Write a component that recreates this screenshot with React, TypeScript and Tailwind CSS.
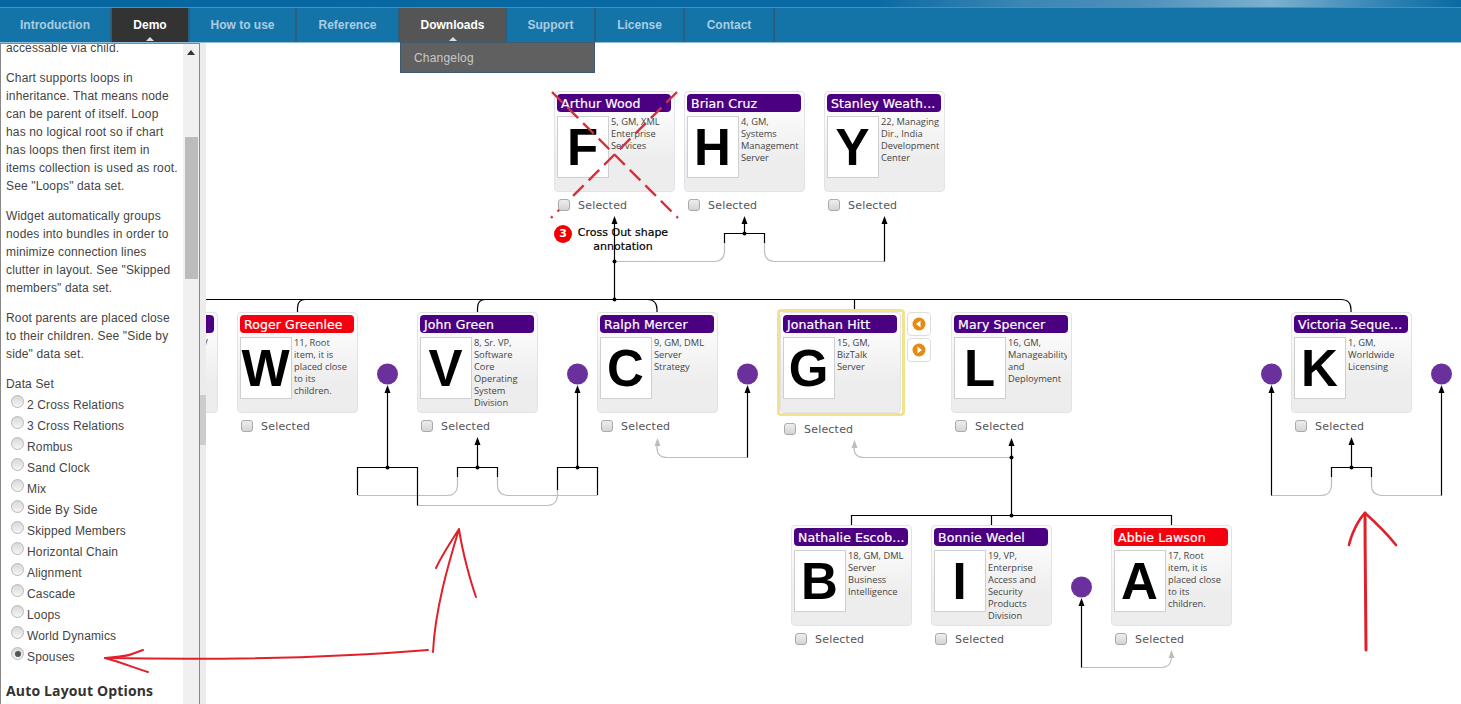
import { ReactNode } from 'react';

const navItems = [
  { label: 'Introduction', w: 'w-[112px]' },
  { label: 'Demo', w: 'w-[78px]', bg: 'bg-[#333333] text-white', caret: true },
  { label: 'How to use', w: 'w-[107px]' },
  { label: 'Reference', w: 'w-[103px]' },
  { label: 'Downloads', w: 'w-[107px]', bg: 'bg-[#555555] text-white', caret: true },
  { label: 'Support', w: 'w-[89px]' },
  { label: 'License', w: 'w-[89px]' },
  { label: 'Contact', w: 'w-[90px]' },
];

const dataSets = [
  '2 Cross Relations',
  '3 Cross Relations',
  'Rombus',
  'Sand Clock',
  'Mix',
  'Side By Side',
  'Skipped Members',
  'Horizontal Chain',
  'Alignment',
  'Cascade',
  'Loops',
  'World Dynamics',
  'Spouses',
];

type NodeData = { x: number; y: number; title: string; letter: string; desc: string; red?: boolean; active?: boolean };

// page coordinates of the chart items
const nodes: NodeData[] = [
  { x: 554, y: 91, title: 'Arthur Wood', letter: 'F', desc: '5, GM, XML Enterprise Services' },
  { x: 684, y: 91, title: 'Brian Cruz', letter: 'H', desc: '4, GM, Systems Management Server' },
  { x: 824, y: 91, title: 'Stanley Weath...', letter: 'Y', desc: '22, Managing Dir., India Development Center' },
  { x: 97, y: 312, title: 'Henry Moore', letter: 'D', desc: '12, GM, NAV' },
  { x: 237, y: 312, title: 'Roger Greenlee', letter: 'W', desc: '11, Root item, it is placed close to its children.', red: true },
  { x: 417, y: 312, title: 'John Green', letter: 'V', desc: '8, Sr. VP, Software Core Operating System Division' },
  { x: 597, y: 312, title: 'Ralph Mercer', letter: 'C', desc: '9, GM, DML Server Strategy' },
  { x: 780, y: 312, title: 'Jonathan Hitt', letter: 'G', desc: '15, GM, BizTalk Server', active: true },
  { x: 951, y: 312, title: 'Mary Spencer', letter: 'L', desc: '16, GM, Manageability and Deployment' },
  { x: 1291, y: 312, title: 'Victoria Seque...', letter: 'K', desc: '1, GM, Worldwide Licensing' },
  { x: 791, y: 525, title: 'Nathalie Escob...', letter: 'B', desc: '18, GM, DML Server Business Intelligence' },
  { x: 931, y: 525, title: 'Bonnie Wedel', letter: 'I', desc: '19, VP, Enterprise Access and Security Products Division' },
  { x: 1111, y: 525, title: 'Abbie Lawson', letter: 'A', desc: '17, Root item, it is placed close to its children.', red: true },
];

const blackPaths = [
  'M206 299.5H1341q10 0 10 10V313',
  'M297.5 313v-5q0-8.500 8-8.500',
  'M477.500 313v-5q0-8.500 8-8.500',
  'M647 299.500q10 0 10 10V313',
  'M854.500 299.500V310',
  'M614.500 222V299.500',
  'M724.500 243V233.500H764.500V243',
  'M744.500 222V233.500',
  'M884.500 222V261.500',
  // John Green group
  'M357.500 495V467.500H417.500V505.500',
  'M387.500 390V467.500',
  'M457.500 477V467.500H497.500V477',
  'M477.500 442V467.500',
  'M557.500 490V467.500H597.500V495',
  'M577.500 390V467.500',
  // Ralph, Mary
  'M747.500 390V457.500',
  'M1011.500 443V515.500',
  'M851.500 525V515.500H1171.500V525',
  'M991.500 515.500V525',
  // Victoria
  'M1271.500 390V495.500',
  'M1441.500 390V495.500',
  'M1331.500 477V467.500H1371.500V477',
  'M1351.500 442V467.500',
  'M1081.500 603V667.500',
];

const grayPaths = [
  'M614.500 261.500H714q10 0 10.500-10V243',
  'M764.500 243v8q0 10 10 10.500H884.500',
  'M357.500 495.500H447q10 0 10.500-10V477',
  'M497.500 477v8q0 10 10 10.500H597.500',
  'M417.500 505.500H547q10 0 10.500-10V488',
  'M747.500 457.500H667q-10 0-10-10V443',
  'M1011.500 457.500H864q-10 0-10-10V445',
  'M1081.500 667.500H1161q10 0 10.500-10V655',
  'M1271.500 495.500H1321q10 0 10.500-10V477',
  'M1371.500 477v8q0 10 10 10.500H1441.500',
];

const arrows = [
  [614.5, 216], [744.5, 216], [884.5, 216],
  [387.5, 385], [477.5, 437], [577.5, 385],
  [747.5, 385], [1011.5, 438], [1081.5, 598],
  [1271.5, 385], [1351.5, 437], [1441.5, 385],
];
const grayArrows = [[657.5, 438], [854.5, 440], [1171.5, 650]];
const dots = [
  [614.5, 299.5], [614.5, 261.5], [744.5, 233.5],
  [387.5, 467.5], [477.5, 467.5], [577.5, 467.5],
  [1011.5, 457.5], [1011.5, 515.5], [1351.5, 467.5],
];
const spouses = [[387.5, 374], [577.5, 374], [747.5, 374], [1271.5, 374], [1441.5, 374], [1081.5, 587]];

function ChartNode({ n }: { n: NodeData }) {
  return (
    <div className="absolute w-[121px]" style={{ left: n.x - 206, top: n.y - 43 }}>
      {n.active && <div className="absolute left-[-3px] top-[-3px] w-[128px] h-[107px] rounded-[4px] border-[3px] border-[#f3e28d]" />}
      <div className="relative h-[101px] rounded-[4px] border border-[#e4e2e8] bg-linear-to-b from-[#fbfbfb] from-20% to-[#ededee] to-70% pl-[2px] pr-[3px] pt-[2px]">
        <div className={`h-[18px] rounded-[4px] px-[4px] text-[12.500px] leading-[19px] tracking-[0.1px] text-white whitespace-nowrap overflow-hidden [-webkit-text-stroke:0.2px] ${n.red ? 'bg-[#f5000f]' : 'bg-[#4b0082]'}`}>
          {n.title}
        </div>
        <div className="flex mt-[4px]">
          <div className="w-[52px] h-[62px] shrink-0 pr-[1px] bg-white border border-[#cfcfcf] flex items-center justify-center font-['Liberation_Sans',sans-serif] font-bold text-[51px] leading-none text-black">
            {n.letter}
          </div>
          <div className="w-[61px] h-[74px] overflow-hidden pl-[2px] font-['Open_Sans',sans-serif] text-[9.300px] leading-[12px] text-[#444]">
            {n.desc}
          </div>
        </div>
      </div>
      <div className={`flex items-center h-[13px] pl-[4px] text-[11px] tracking-[0.2px] text-[#555] ${n.active ? 'mt-[9px]' : 'mt-[6px]'}`}>
        <span className="relative z-20 w-[12px] h-[12px] rounded-[3px] border border-[#aaa] bg-linear-to-b from-[#eee] to-[#d4d4d4]" />
        <span className="ml-[8px] mt-[3px]">Selected</span>
      </div>
    </div>
  );
}

function Para({ children }: { children: ReactNode }) {
  return <p className="mb-[12px]">{children}</p>;
}

function Sidebar() {
  return (
    <div className="flex w-[200px] h-full border-x border-t border-[#888] bg-white overflow-hidden">
      <div className="w-[182px] shrink-0 pl-[5px] pr-[5px] text-[12px] leading-[18px] text-[#444] font-['Liberation_Sans',sans-serif] tracking-[0.15px]">
        <div className="-mt-[5px]">
          <Para>accessable via child.</Para>
          <Para>Chart supports loops in inheritance. That means node can be parent of itself. Loop has no logical root so if chart has loops then first item in items collection is used as root. See "Loops" data set.</Para>
          <Para>Widget automatically groups nodes into bundles in order to minimize connection lines clutter in layout. See "Skipped members" data set.</Para>
          <Para>Root parents are placed close to their children. See "Side by side" data set.</Para>
          <div>Data Set</div>
          <div className="pt-[1px]">
            {dataSets.map(d => (
              <div key={d} className="flex h-[21px] items-center">
                <span className="ml-[5px] mt-[-6px] w-[13px] h-[13px] rounded-full border border-[#b8b8b8] bg-linear-to-b from-[#d8d8d8] to-[#f6f6f6] flex items-center justify-center">
                  {d === 'Spouses' && <span className="w-[6px] h-[6px] rounded-full bg-[#555]" />}
                </span>
                <span className="ml-[3px]">{d}</span>
              </div>
            ))}
          </div>
          <div className="mt-[15px] font-['Open_Sans',sans-serif] font-bold text-[14px] text-[#333] whitespace-nowrap">Auto Layout Options</div>
        </div>
      </div>
      <div className="w-[16px] shrink-0 bg-[#f0f0f0] flex flex-col items-center">
        <div className="mt-[6px] w-0 h-0 border-x-[4px] border-x-transparent border-b-[5px] border-b-[#333]" />
        <div className="mt-[82px] w-[13px] h-[142px] bg-[#bcbcbc]" />
      </div>
    </div>
  );
}

export default function App() {
  return (
    <div className="relative w-[1461px] h-[704px] overflow-hidden bg-white font-['DejaVu_Sans',sans-serif]">
      {/* top strip */}
      <div className="h-[8px] border-b border-[#3f93c4] bg-[linear-gradient(to_right,#06669f_0%,#0a6aa3_60%,#3c86b4_70%,#4d90ba_78%,#7cb1cf_87%,#2f82b3_95%,#0a6aa1_100%)]" />
      {/* main menu */}
      <div className="relative z-10 flex h-[35px] bg-[#1574a7] border-b border-[#8fbcd8] font-['Liberation_Sans',sans-serif] text-[12px] font-bold text-[#a9cde2]">
        {navItems.map(item => (
          <div key={item.label} className={`relative flex items-center justify-center h-[34px] border-r-2 border-[#2b5f80] ${item.w} ${item.bg ?? ''}`}>
            {item.label}
            {item.caret && <span className="absolute bottom-[1px] w-0 h-0 border-x-[4px] border-x-transparent border-b-[4px] border-b-[#dddddd]" />}
          </div>
        ))}
        <div className="absolute left-[400px] top-[34px] w-[195px] h-[31px] bg-[#606060] border border-[#3d5a70] pl-[13px] font-normal tracking-[0.2px] leading-[30px] text-[#c8c8c8]">
          Changelog
        </div>
      </div>

      <div className="flex h-[661px]">
        <Sidebar />
        {/* second scroll bar */}
        <div className="w-[6px] shrink-0 bg-[#ececec]">
          <div className="mt-[352px] h-[50px] bg-[#cccccc]" />
        </div>

        {/* chart canvas */}
        <div className="relative flex-1 overflow-hidden">
          <div className="absolute left-[349px] top-[183px] w-[136px] text-center text-[11px] leading-[14px] text-black [-webkit-text-stroke:0.2px]">
            Cross Out shape annotation
          </div>
          <svg className="absolute inset-0 w-full h-full" viewBox="206 43 1255 661" fill="none">
            {grayPaths.map(d => <path key={d} d={d} stroke="#bdbdbd" strokeWidth="1.200" />)}
            {blackPaths.map(d => <path key={d} d={d} stroke="#000" strokeWidth="1.200" />)}
            {arrows.map(([x, y]) => <path key={`${x}-${y}`} d={`M${x} ${y}l-3 8h6z`} fill="#000" />)}
            {grayArrows.map(([x, y]) => <path key={`${x}-${y}`} d={`M${x} ${y}l-3 8h6z`} fill="#bdbdbd" />)}
            {dots.map(([x, y]) => <circle key={`${x}-${y}`} cx={x} cy={y} r="2" fill="#000" />)}
            {spouses.map(([x, y]) => <circle key={`${x}-${y}`} cx={x} cy={y} r="10.500" fill="#6a309b" />)}
          </svg>
          {nodes.map(n => <ChartNode key={n.title} n={n} />)}

          {/* item buttons */}
          <div className="absolute left-[701px] top-[269px] flex flex-col gap-[2px]">
            {['M11.500 8.500v7l-4.500-3.500z', 'M8.500 8.500v7l4.500-3.500z'].map(d => (
              <div key={d} className="w-[24px] h-[24px] rounded-[4px] border border-[#dddddd] bg-white flex items-center justify-center">
                <svg width="20" height="24" viewBox="0 0 20 24">
                  <circle cx="10" cy="12" r="6.500" fill="#e68a12" />
                  <path d={d} fill="#fff" />
                </svg>
              </div>
            ))}
          </div>

          {/* annotation badge */}
          <div className="absolute left-[348px] top-[182px] w-[18px] h-[18px] rounded-full bg-[#f00000] text-white text-[11px] font-bold leading-[18px] text-center">
            3
          </div>

          {/* cross out shape, the checkbox stays above it */}
          <svg className="absolute inset-0 z-10 w-full h-full pointer-events-none" viewBox="206 43 1255 661" fill="none">
            <path d="M552 92L678 218M677 92L551 218" stroke="#dd2c3a" strokeWidth="2.400" strokeDasharray="15 7" />
          </svg>
        </div>
      </div>

      {/* hand drawn marks lie over everything */}
      <svg className="absolute inset-0 z-30 w-full h-full pointer-events-none" viewBox="0 0 1461 704" fill="none">
        <g stroke="#e0202a" strokeWidth="2" strokeLinecap="round" strokeLinejoin="round">
          <path d="M105 658C210 660 320 659 428 650" />
          <path d="M105 658C118 657 128 656 132 654L143 650M105 658C120 662 135 668 148 672" />
          <path d="M433 652C435 610 448 565 459 529M459 529C452 540 442 555 436 568M459 529C462 550 470 580 476 597" />
          <path d="M1366 650C1366 610 1365 560 1365 513" strokeWidth="3" />
          <path d="M1365 513C1358 520 1351 535 1349 545M1365 513C1375 522 1388 535 1396 545" strokeWidth="2.500" />
        </g>
      </svg>
    </div>
  );
}
